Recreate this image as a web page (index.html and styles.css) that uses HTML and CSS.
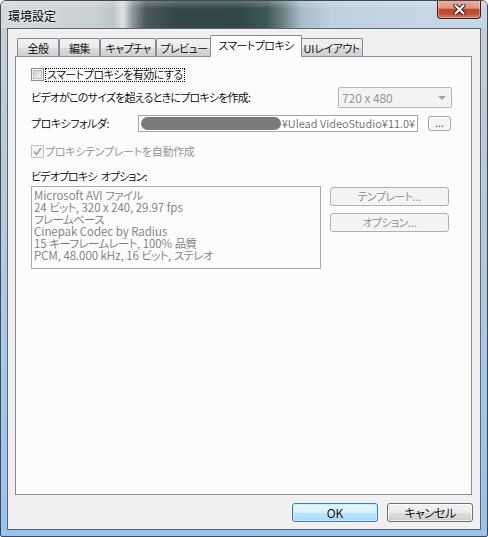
FILE: index.html
```html
<!DOCTYPE html>
<html lang="ja">
<head>
<meta charset="utf-8">
<title>環境設定</title>
<link rel="stylesheet" href="styles.css">
</head>
<body>
<div class="window">
  <div class="titlebar">
    <span class="title">環境設定</span>
    <div class="close">
      <svg width="13" height="11" viewBox="0 0 13 11"><path d="M2.5 1.5 L10.5 9.5 M10.5 1.5 L2.5 9.5" stroke="#3b1c14" stroke-width="4.2" stroke-linecap="round"/><path d="M2.5 1.5 L10.5 9.5 M10.5 1.5 L2.5 9.5" stroke="#ffffff" stroke-width="2.2" stroke-linecap="round"/></svg>
    </div>
  </div>
  <div class="client">
    <div class="tabs">
      <div class="tab w1"><span class="ja">全般</span></div>
      <div class="tab w2"><span class="ja">編集</span></div>
      <div class="tab w3"><span class="ja">キャプチャ</span></div>
      <div class="tab w4"><span class="ja">プレビュー</span></div>
      <div class="tab selected"><span class="ja">スマートプロキシ</span></div>
      <div class="tab w6">UI<span class="ja">レイアウト</span></div>
    </div>
    <div class="panel">
      <div class="row row-enable">
        <span class="cb"></span>
        <span class="focus"><span class="ja ls-enable">スマートプロキシを有効にする</span></span>
      </div>
      <div class="row row-size">
        <span class="ja ls-size">ビデオがこのサイズを超えるときにプロキシを作成:</span>
        <div class="combo"><span>720 x 480</span><span class="arrow"></span></div>
      </div>
      <div class="row row-folder">
        <span class="folder-label"><span class="ja ls-folder">プロキシフォルダ:</span></span>
        <div class="field"><span class="blob"></span><span class="path">¥Ulead VideoStudio¥11.0¥</span></div>
        <div class="btn browse">...</div>
      </div>
      <div class="row row-auto">
        <span class="cb checked"><svg width="9" height="9" viewBox="0 0 9 9"><path d="M1 4.5 L3.5 7.5 L8 1" fill="none" stroke="#a7a7a7" stroke-width="1.8"/></svg></span>
        <span class="ja ls-auto disabled-text">プロキシテンプレートを自動作成</span>
      </div>
      <div class="group-label"><span class="ja ls-group">ビデオプロキシ</span><span class="sp"></span><span class="ja ls-group">オプション:</span></div>
      <div class="options">
        <div class="listbox">
          <div>Microsoft AVI <span class="ja">ファイル</span></div>
          <div>24 <span class="ja">ビット</span>, 320 x 240, 29.97 fps</div>
          <div><span class="ja">フレームベース</span></div>
          <div>Cinepak Codec by Radius</div>
          <div>15 <span class="ja">キーフレームレート</span>, 100% <span class="ja">品質</span></div>
          <div>PCM, 48.000 kHz, 16 <span class="ja">ビット</span>, <span class="ja">ステレオ</span></div>
        </div>
        <div class="side-buttons">
          <div class="btn disabled-btn"><span class="ja">テンプレート</span>...</div>
          <div class="btn disabled-btn"><span class="ja">オプション</span>...</div>
        </div>
      </div>
    </div>
    <div class="footer">
      <div class="btn dlg default">OK</div>
      <div class="btn dlg"><span class="ja">キャンセル</span></div>
    </div>
  </div>
</div>
</body>
</html>
```

FILE: styles.css
```css
* { box-sizing: border-box; }
html, body { margin: 0; padding: 0; background: #ffffff; }
body {
  font-family: "Noto Sans CJK JP", sans-serif;
  font-size: 11px;
  font-weight: 350;
  font-feature-settings: "palt";
  color: #000;
  line-height: 1;
}
.ja { letter-spacing: -0.6px; }
.ls-enable { letter-spacing: -0.5px; }
.ls-size { letter-spacing: -0.8px; }
.ls-folder { letter-spacing: -0.5px; }
.ls-auto { letter-spacing: -0.3px; }
.ls-group { letter-spacing: -0.9px; }
.sp { display: inline-block; width: 4px; }
.window {
  width: 488px;
  height: 537px;
  border: 1px solid #3f4a55;
  border-radius: 6px 6px 2px 2px;
  padding: 0 6px 6px 6px;
  display: flex;
  flex-direction: column;
  background: linear-gradient(to bottom, #c8cfd4 0%, #b9cad8 35%, #a6c8e8 70%, #98c3ec 100%);
  overflow: hidden;
}
.titlebar {
  height: 27px;
  margin: 0 -6px;
  padding: 0 6px 0 7px;
  display: flex;
  align-items: flex-start;
  justify-content: space-between;
  background:
    linear-gradient(to bottom, rgba(255,255,255,0.25) 0, rgba(255,255,255,0) 8px),
    linear-gradient(to right, #d3d8db 0px, #c9d0d3 95px, #bcc5c8 112px, #dde2e4 122px, #8a9698 132px, #4a585c 145px, #34464a 175px, #2f4749 240px, #3e5858 266px, #6e8488 283px, #a8bccb 300px, #bfd0de 330px, #c6d6e4 420px, #c4d6e6 488px);
}
.title {
  margin-top: 9px;
  font-size: 12px;
  font-weight: 400;
  color: #000;
  text-shadow: 0 0 6px rgba(255,255,255,0.9), 0 0 2px rgba(255,255,255,0.9);
}
.close {
  width: 44px;
  height: 19px;
  margin-top: -1px;
  border: 1px solid #4a1a12;
  border-top: none;
  border-radius: 0 0 4px 4px;
  background: linear-gradient(to bottom, #ecb3a4 0%, #df9482 45%, #c14a30 52%, #c24d32 75%, #dc7a5c 100%);
  box-shadow: inset 0 0 0 1px rgba(255,255,255,0.35);
  display: flex;
  align-items: center;
  justify-content: center;
}
.client {
  flex: 1;
  border: 1px solid #5b6570;
  background: #f0f0f0;
  display: flex;
  flex-direction: column;
}
.tabs {
  margin-top: 6px;
  margin-left: 9px;
  height: 21px;
  display: flex;
  align-items: flex-end;
}
.tab {
  height: 18px;
  border: 1px solid #898c95;
  border-bottom: none;
  border-radius: 2px 2px 0 0;
  background: linear-gradient(to bottom, #f2f2f2 0%, #ebebeb 50%, #dddddd 51%, #cfcfcf 100%);
  display: flex;
  align-items: center;
  justify-content: center;
  padding-top: 1px;
  white-space: nowrap;
  font-size: 11px;
}
.tab .ja { letter-spacing: -0.6px; }
.w1 { width: 42px; }
.w2 { width: 41px; }
.w3 { width: 56px; }
.w4 { width: 56px; }
.w6 { width: 63px; }
.tab.selected {
  position: relative;
  z-index: 1;
  width: 92px;
  height: 22px;
  margin: 0 -2px -1px -2px;
  background: #fcfcfc;
  padding-top: 0;
  padding-bottom: 3px;
}
.panel {
  margin-left: 7px;
  width: 457px;
  height: 439px;
  border: 1px solid #898c95;
  background: #fcfcfc;
  padding: 0 19px 0 15px;
  display: flex;
  flex-direction: column;
}
.row {
  display: flex;
  align-items: center;
}
.row-enable { margin-top: 10px; height: 15px; }
.row-size { margin-top: 5px; height: 21px; justify-content: space-between; }
.row-folder { margin-top: 7px; height: 17px; }
.row-auto { margin-top: 12px; height: 15px; }
.cb {
  width: 13px;
  height: 13px;
  flex: none;
  border: 1px solid #8e8f8f;
  background: linear-gradient(135deg, #c3c7cc 0%, #e4e6e9 60%, #f7f7f7 100%);
  box-shadow: inset 0 0 0 1px #f4f4f4, inset 0 0 0 2px #b8bcc2;
  margin-right: 1px;
}
.cb.checked {
  border-color: #c2c2c2;
  background: #f6f6f6;
  box-shadow: none;
  display: flex;
  align-items: center;
  justify-content: center;
}
.focus {
  border: 1px dotted #000;
  height: 14px;
  padding: 0 1px;
  display: flex;
  align-items: center;
}
.combo {
  width: 114px;
  height: 21px;
  border: 1px solid #b4b8bc;
  border-radius: 2px;
  background: #f4f4f4;
  color: #8a8a8a;
  display: flex;
  align-items: center;
  justify-content: space-between;
  padding: 0 5px 0 3px;
  font-size: 12px;
}
.arrow {
  width: 0;
  height: 0;
  border-left: 4px solid transparent;
  border-right: 4px solid transparent;
  border-top: 4px solid #a6a6a6;
}
.folder-label { width: 107px; flex: none; }
.field {
  width: 280px;
  height: 17px;
  flex: none;
  overflow: hidden;
  border: 1px solid #a5a8ae;
  background: #fff;
  display: flex;
  align-items: center;
  padding: 0 2px;
  color: #6d6d6d;
  font-size: 11px;
}
.blob {
  flex: 1;
  min-width: 120px;
  height: 13px;
  border-radius: 7px;
  background: #7b7b7b;
}
.path { flex: none; padding-left: 1px; white-space: nowrap; }
.btn {
  display: flex;
  align-items: center;
  justify-content: center;
  border: 1px solid #707070;
  border-radius: 3px;
  background: linear-gradient(to bottom, #f2f2f2 0%, #ebebeb 50%, #dddddd 51%, #cfcfcf 100%);
  box-shadow: inset 0 0 0 1px rgba(255,255,255,0.7);
  white-space: nowrap;
}
.browse {
  margin-left: 10px;
  width: 23px;
  height: 15px;
  flex: none;
  border-color: #a3a3a3;
  background: #f4f4f4;
  color: #555;
  padding-bottom: 3px;
}
.disabled-text { color: #8f8f8f; }
.group-label { margin-top: 11px; height: 13px; display: flex; align-items: center; }
.options {
  margin-top: 3px;
  display: flex;
  align-items: flex-start;
}
.listbox {
  width: 290px;
  height: 83px;
  border: 1px solid #a9a9a9;
  background: #fcfcfc;
  color: #7a7a7a;
  padding: 2px 0 0 2px;
  line-height: 12px;
  font-size: 11.5px;
}
.side-buttons {
  margin-left: 9px;
  margin-top: 1px;
  display: flex;
  flex-direction: column;
  gap: 7px;
}
.disabled-btn {
  width: 119px;
  height: 19px;
  border-color: #adb2b5;
  background: #f4f4f4;
  box-shadow: none;
  color: #8a8a8a;
}
.footer {
  margin-top: 8px;
  padding-right: 7px;
  display: flex;
  justify-content: flex-end;
  gap: 9px;
}
.dlg { width: 86px; height: 19px; font-size: 12px; }
.default {
  border-color: #3c7fb1;
  background: linear-gradient(to bottom, #eaf6fd 0%, #d9f0fc 50%, #bee6fd 51%, #a7d9f5 100%);
  box-shadow: inset 0 0 0 1px #c9ecfd;
}
```
